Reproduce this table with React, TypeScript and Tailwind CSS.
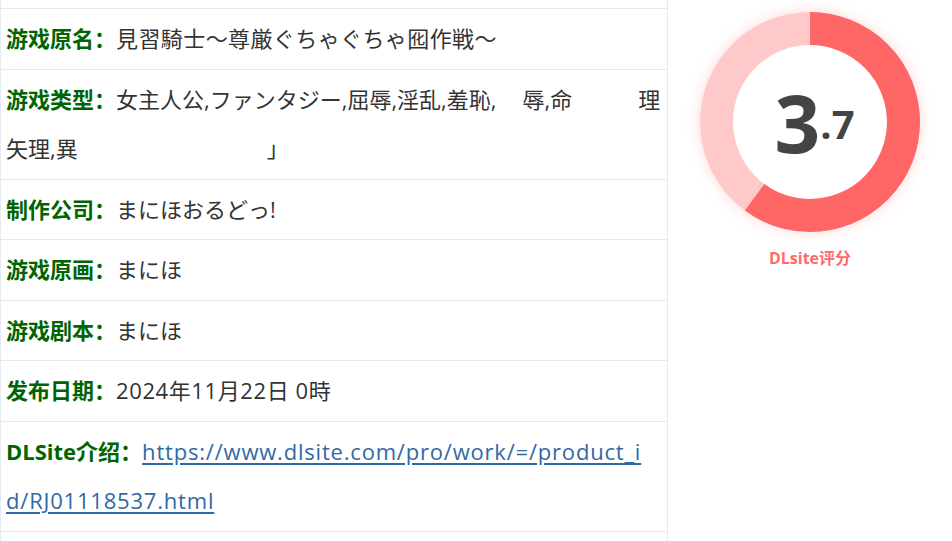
import React from 'react';

const font = { fontFamily: '"Open Sans", "Noto Sans CJK SC", sans-serif' };

const Row = ({ label, children }: { label: string; children: React.ReactNode }) => (
    <div className="border-t border-[#e3ebf3] px-[5px] py-[5px] text-[22px] leading-[49.5px] text-[#333] break-all">
        <span className="font-bold text-[#006400]">{label}：</span>
        {children}
    </div>
);

const Gap = ({ w }: { w: number }) => <span className="inline-block" style={{ width: w }} />;

const ScoreRing = ({ score, max }: { score: number; max: number }) => {
    const r = 93.5;
    const c = 2 * Math.PI * r;
    const part = (score / max) * c;
    return (
        <div className="relative w-[220px] h-[220px] rounded-full shadow-[0_0_14px_rgba(255,110,110,0.28)]">
            <svg width="220" height="220" viewBox="0 0 220 220" className="absolute inset-0">
                <circle cx="110" cy="110" r={r} fill="none" stroke="#ffc9c9" strokeWidth="33" />
                <circle
                    cx="110" cy="110" r={r} fill="none" stroke="#ff6767" strokeWidth="33"
                    strokeDasharray={`${part} ${c}`}
                    transform="rotate(-90 110 110)"
                />
            </svg>
            <div className="absolute inset-0 flex items-center justify-center">
                <div className="font-bold text-[#444] leading-none pl-[9px]" style={{ fontFamily: '"Open Sans", sans-serif' }}>
                    <span className="text-[80px]">3</span>
                    <span className="text-[40px] align-[14px]">.7</span>
                </div>
            </div>
        </div>
    );
};

export default function App() {
    return (
        <div className="w-[952px] h-[541px] overflow-hidden bg-white flex" style={font}>
            <div className="w-[668px] border-x border-[#e3ebf3] flex flex-col">
                <div className="h-[8px] shrink-0" />
                <Row label="游戏原名"><span className="tracking-[0.4px]">見習騎士～尊厳ぐちゃぐちゃ囮作戦～</span></Row>
                <Row label="游戏类型">
                    女主人公,ファンタジー,屈辱,淫乱,羞恥,<Gap w={26} />辱,命<Gap w={66} />理
                    <br />
                    矢理,異<Gap w={189} />」
                </Row>
                <Row label="制作公司">まにほおるどっ!</Row>
                <Row label="游戏原画">まにほ</Row>
                <Row label="游戏剧本">まにほ</Row>
                <Row label="发布日期"><span className="tracking-[0.6px]">2024年11月22日 0時</span></Row>
                <Row label="DLSite介绍">
                    <a href="#" className="text-[#2f6aa6] underline underline-offset-[3px] tracking-[0.8px]">
                        https://www.dlsite.com/pro/work/=/product_id/RJ01118537.html
                    </a>
                </Row>
                <div className="border-t border-[#e3ebf3] h-[60px] shrink-0" />
            </div>
            <div className="flex-1 flex flex-col items-center pt-[12px]">
                <ScoreRing score={3} max={5} />
                <div className="mt-[14px] text-[16px] font-bold text-[#ff6b6b]">DLsite评分</div>
            </div>
        </div>
    );
}
